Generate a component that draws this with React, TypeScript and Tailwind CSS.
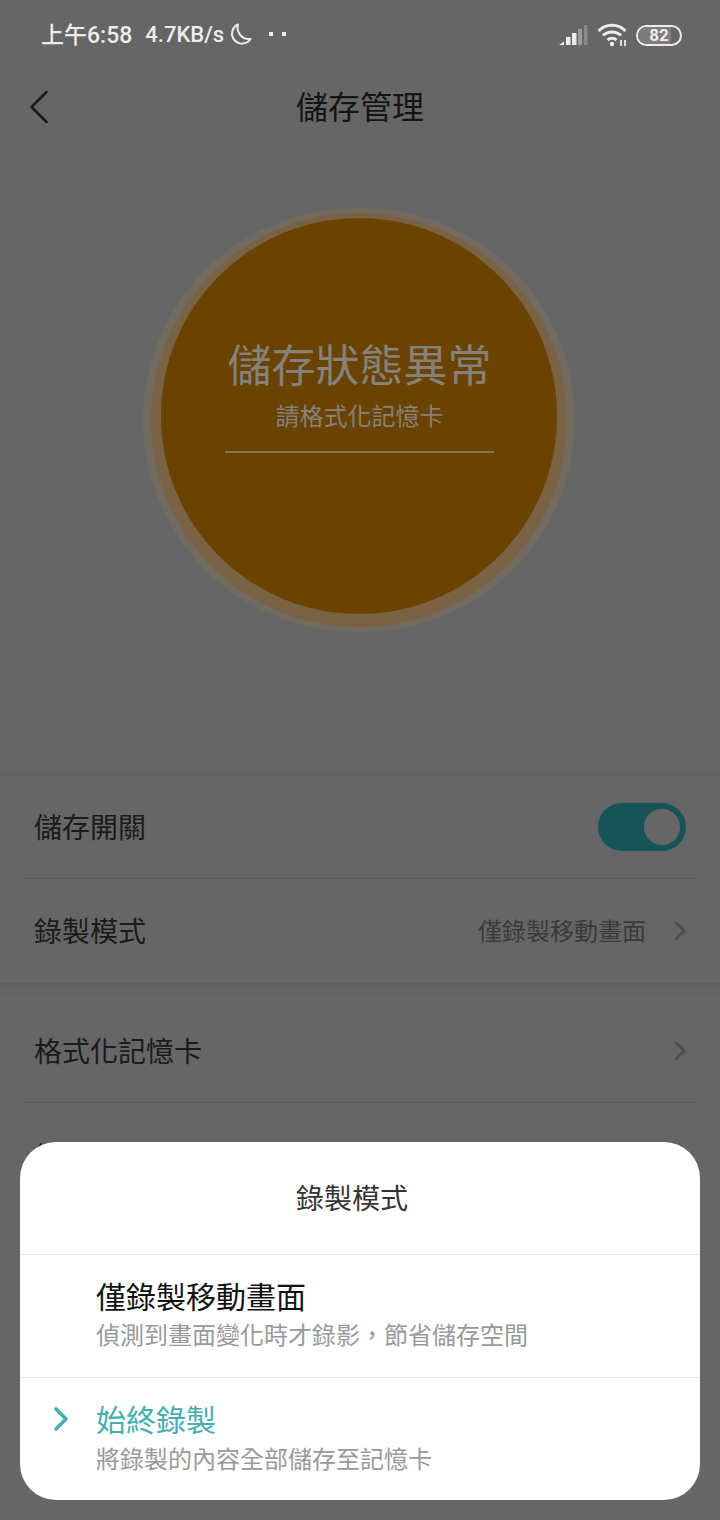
import { ChevronRight, ChevronLeft } from "lucide-react";

const cjk = "font-['Roboto','Noto_Sans_CJK_TC',sans-serif]";

const StatusBar = () => (
    <div className="h-[70px] flex items-center justify-between pl-[41px] pr-[38px] text-[#ececec]">
        <div className="flex items-center font-medium">
            <span className="text-[23px] leading-none">上午6:58</span>
            <span className="ml-[13px] text-[22px] leading-none">4.7KB/s</span>
            <svg width="26" height="26" viewBox="0 0 26 26" className="ml-[3px]" fill="none" stroke="#ececec" strokeWidth="2">
                <path d="M11 2.5 A10 10 0 1 0 23.5 17 A11.5 11.5 0 0 1 11 2.5 Z" strokeLinejoin="round" />
            </svg>
            <div className="ml-[16px] mb-[3px] flex gap-[9px]">
                <div className="w-[4px] h-[4px] bg-[#ececec]" />
                <div className="w-[4px] h-[4px] bg-[#ececec]" />
            </div>
        </div>
        <div className="flex items-center">
            <svg width="29" height="24" viewBox="0 0 29 24" fill="#ececec">
                <path d="M0 22 L5 18.5 V22 Z" />
                <rect x="7" y="14" width="4.5" height="8" />
                <rect x="13" y="10" width="4.5" height="12" />
                <rect x="19" y="6" width="4" height="16" fill="#9a9a9a" />
                <rect x="25" y="2" width="3.5" height="20" fill="#8a8a8a" />
            </svg>
            <svg width="32" height="24" viewBox="0 0 32 24" className="ml-[9px]" fill="none" stroke="#ececec" strokeWidth="3">
                <path d="M1.5 8 A19 19 0 0 1 28.5 8" />
                <path d="M6 12.5 A13 13 0 0 1 24 12.5" />
                <path d="M10.5 17 A7 7 0 0 1 19.5 17" />
                <circle cx="15" cy="21" r="2.2" fill="#ececec" stroke="none" />
                <path d="M24 17 V23 M28 17 V23" strokeWidth="1.8" />
            </svg>
            <div className="ml-[7px] w-[46px] h-[21px] rounded-full border-2 border-[#ececec] relative overflow-hidden flex items-center justify-center">
                <div className="absolute left-0 top-0 bottom-0 w-[33px] bg-[#7d7d7d]" />
                <span className="relative text-[17px] leading-none font-bold text-[#ececec]">82</span>
            </div>
        </div>
    </div>
);

const Row = ({ label, value, chevron, toggle }: { label: string; value?: string; chevron?: boolean; toggle?: boolean }) => (
    <div className="h-full flex items-center justify-between pl-[9px] pr-[9px]">
        <span className="pt-[4px] text-[28px] leading-none text-[#1a1a1a]">{label}</span>
        <div className="flex items-center">
            {value && <span className="pt-[2px] text-[24px] leading-none text-[#3a3a3a] mr-[17px]">{value}</span>}
            {chevron && <ChevronRight size={34} strokeWidth={1.8} className="text-[#4c4c4c] -mr-[11px]" />}
            {toggle && (
                <div className="w-[88px] h-[48px] rounded-full bg-[#175458] flex items-center justify-end pr-[6px]">
                    <div className="w-[36px] h-[36px] rounded-full bg-[#666666]" />
                </div>
            )}
        </div>
    </div>
);

const App = () => {
    return (
        <div className={`${cjk} relative w-[720px] h-[1520px] overflow-hidden bg-[#666666]`}>
            <StatusBar />

            {/* title bar */}
            <div className="h-[76px] relative flex items-center justify-center">
                <ChevronLeft size={60} strokeWidth={1} className="absolute left-[9px] top-[7px] text-[#1a1a1a]" />
                <span className="text-[32px] leading-none text-[#141414]">儲存管理</span>
            </div>

            {/* storage status circle */}
            <div className="h-[625px] flex justify-center pt-[62px]">
                <div className="w-[432px] h-[424px] rounded-full bg-[#726b60] flex items-center justify-center -ml-[2px]">
                    <div className="w-[416px] h-[414px] rounded-full bg-[#7a6244] flex justify-center pt-[5px]">
                        <div className="w-[396px] h-[396px] rounded-full bg-[#6a4300] flex flex-col items-center pt-[120px]">
                            <span className="ml-[1px] text-[44px] leading-[58px] text-[#86817a]">儲存狀態異常</span>
                            <span className="ml-[1px] mt-[6px] text-[24px] leading-[30px] text-[#86817a]">請格式化記憶卡</span>
                            <div className="mt-[19px] ml-[1px] w-[269px] h-[2px] bg-[#8a7450]" />
                        </div>
                    </div>
                </div>
            </div>

            {/* settings groups */}
            <div className="h-[212px] px-[25px] bg-gradient-to-b from-[#636363] to-[#666666] to-[6%]">
                <div className="h-[108px] pt-[5px] border-b border-[#5b5b5b]">
                    <Row label="儲存開關" toggle />
                </div>
                <div className="h-[104px]">
                    <Row label="錄製模式" value="僅錄製移動畫面" chevron />
                </div>
            </div>
            <div className="h-[16px] bg-gradient-to-b from-[#606060] to-[#666666]" />
            <div className="px-[25px]">
                <div className="h-[104px] border-b border-[#5b5b5b]">
                    <Row label="格式化記憶卡" chevron />
                </div>
                <div className="h-[105px]">
                    <Row label="儲存卡容量" />
                </div>
            </div>

            {/* bottom sheet */}
            <div className="absolute left-[20px] top-[1142px] w-[680px] h-[358px] rounded-[36px] bg-white overflow-hidden">
                <div className="h-[113px] pt-[3px] flex items-center justify-center border-b border-[#e6e6e6]">
                    <span className="text-[28px] leading-none text-[#333333] -ml-[16px]">錄製模式</span>
                </div>
                <div className="h-[123px] pl-[76px] pt-[24px] border-b border-[#e6e6e6]">
                    <div className="text-[30px] leading-[38px] text-[#111111]">僅錄製移動畫面</div>
                    <div className="mt-[4px] text-[24px] leading-[30px] text-[#999999]">偵測到畫面變化時才錄影{"\uFF0C"}節省儲存空間</div>
                </div>
                <div className="relative pl-[76px] pt-[24px]">
                    <ChevronRight size={40} strokeWidth={2.2} className="absolute left-[21px] top-[21px] text-[#44aeb0]" />
                    <div className="text-[30px] leading-[38px] text-[#44aeb0]">始終錄製</div>
                    <div className="mt-[5px] text-[24px] leading-[30px] text-[#999999]">將錄製的內容全部儲存至記憶卡</div>
                </div>
            </div>
        </div>
    );
};

export default App;
